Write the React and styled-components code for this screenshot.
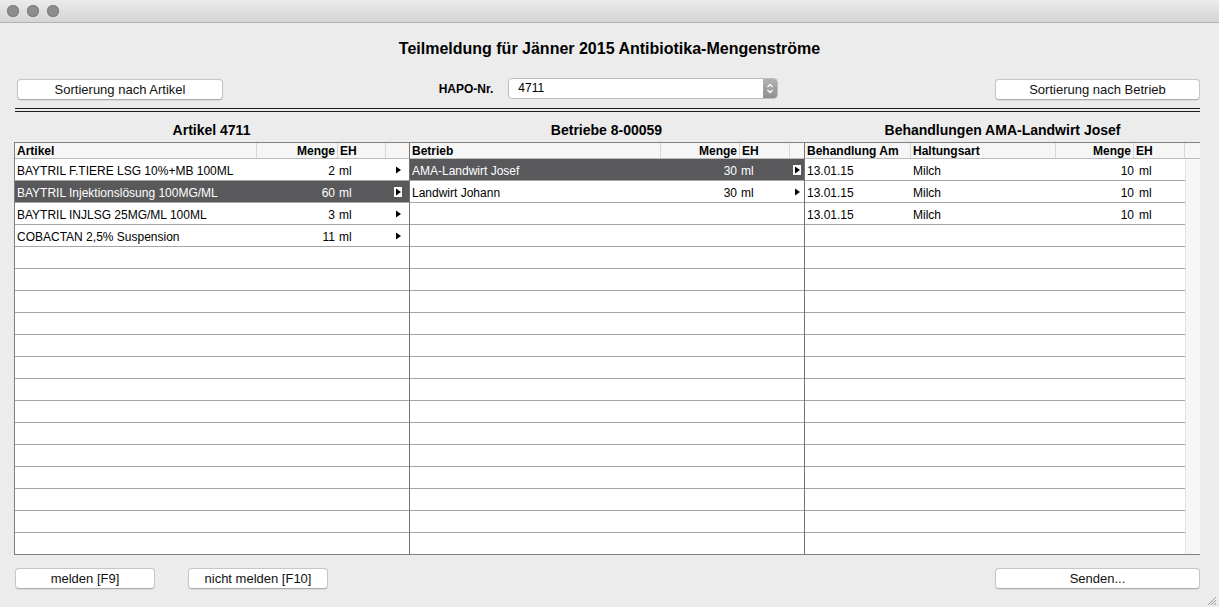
import React from "react";
import styled, { createGlobalStyle } from "styled-components";

const Global = createGlobalStyle`
  html, body { margin: 0; padding: 0; background: #ececec; }
  body { font-family: "Liberation Sans", Arial, sans-serif; color: #000; }
  * { box-sizing: border-box; }
`;

const Window = styled.div`
  position: relative;
  width: 1219px;
  height: 607px;
  background: #ececec;
  overflow: hidden;
  display: flex;
  flex-direction: column;
`;

const TitleBar = styled.div`
  flex: none;
  height: 23px;
  background: linear-gradient(#ebebeb, #d5d5d5);
  border-bottom: 1px solid #b2b2b2;
  display: flex;
  align-items: center;
  gap: 8px;
  padding: 0 0 1px 7px;
`;

const Light = styled.span`
  width: 12px;
  height: 12px;
  border-radius: 50%;
  background: #8e8e8e;
  box-shadow: inset 0 0 0 1px #7c7c7c;
`;

const Heading = styled.h1`
  margin: 16px 0 0;
  font-size: 16px;
  line-height: 19px;
  font-weight: bold;
  text-align: center;
`;

const Toolbar = styled.div`
  margin-top: 20px;
  height: 22px;
  padding: 0 19px 0 17px;
  display: grid;
  grid-template-columns: 1fr auto 1fr;
  align-items: start;
`;

const Button = styled.button`
  width: ${(p) => p.$w}px;
  height: 21px;
  margin-top: ${(p) => p.$mt || 0}px;
  justify-self: ${(p) => p.$justify || "auto"};
  background: #fff;
  border: 1px solid #c6c6c6;
  border-bottom-color: #adadad;
  border-radius: 4px;
  box-shadow: 0 0.5px 1px rgba(0, 0, 0, 0.08);
  font-family: "Liberation Sans", Arial, sans-serif;
  font-size: 13px;
  line-height: 19px;
  color: #111;
  padding: 0;
  text-align: center;
`;

const HapoGroup = styled.div`
  display: flex;
  align-items: center;
  gap: 15px;
  height: 21px;
`;

const Label = styled.span`
  font-size: 12px;
  font-weight: bold;
  line-height: 21px;
  padding-top: 1px;
`;

const Select = styled.div`
  width: 270px;
  height: 21px;
  background: #fff;
  border: 1px solid #bdbdbd;
  border-radius: 4px;
  display: flex;
  align-items: stretch;
  overflow: hidden;
`;

const SelectValue = styled.span`
  flex: 1;
  font-size: 12px;
  line-height: 19px;
  padding-left: 9px;
`;

const Stepper = styled.span`
  width: 14px;
  background: linear-gradient(#b2b2b2, #8f8f8f);
  display: flex;
  align-items: center;
  justify-content: center;
`;

const Rule = styled.div`
  margin: 8px 19px 0 15px;
  height: 4px;
  border-top: 1px solid #1c1c1c;
  border-bottom: 1px solid #1c1c1c;
`;

const PanelTitles = styled.div`
  margin: 10px 19px 0 14px;
  display: grid;
  grid-template-columns: 395px 395px 397px;
`;

const PanelTitle = styled.div`
  font-size: 14px;
  font-weight: bold;
  line-height: 16px;
  text-align: center;
`;

const Table = styled.div`
  margin: 4px 19px 0 14px;
  height: 413px;
  border: 1px solid #7f7f7f;
  display: grid;
  grid-template-columns: 394px 395px 396px;
`;

const Panel = styled.div`
  border-left: ${(p) => (p.$divider ? "1px solid #737373" : "none")};
  overflow: hidden;
  display: flex;
  flex-direction: column;
  background: #fff;
`;

const HeaderRow = styled.div`
  flex: none;
  height: 16px;
  display: grid;
  grid-template-columns: ${(p) => p.$cols};
  background: #f6f6f6;
  border-bottom: 1px solid #bdbdbd;
`;

const HeaderCell = styled.div`
  font-size: 12px;
  font-weight: bold;
  line-height: 14px;
  padding: 1px 2px 0;
  text-align: ${(p) => p.$align || "left"};
  border-right: ${(p) => (p.$last ? "none" : "1px solid #d7d7d7")};
  white-space: nowrap;
  overflow: hidden;
`;

const Body = styled.div`
  flex: 1;
  display: flex;
  min-height: 0;
`;

const Rows = styled.div`
  flex: 1;
  min-width: 0;
`;

const Track = styled.div`
  width: 15px;
  background: #f7f7f7;
  border-left: 1px solid #e2e2e2;
`;

const Row = styled.div`
  height: 22px;
  display: grid;
  grid-template-columns: ${(p) => p.$cols};
  border-bottom: 1px solid #a6a6a6;
  background: ${(p) => (p.$selected ? "#59595b" : "#fff")};
  color: ${(p) => (p.$selected ? "#fff" : "#000")};
`;

const Cell = styled.div`
  font-size: 12px;
  line-height: 18px;
  padding-top: 3px;
  padding-left: ${(p) => p.$pl ?? 2}px;
  padding-right: ${(p) => p.$pr ?? 2}px;
  text-align: ${(p) => p.$align || "left"};
  white-space: nowrap;
  overflow: hidden;
`;

const ArrowCell = styled.div`
  display: flex;
  align-items: center;
  justify-content: center;
`;

const Footer = styled.div`
  margin-top: 13px;
  padding: 0 19px 0 15px;
  display: flex;
  gap: 33px;
`;

const Grip = styled.svg`
  position: absolute;
  right: 2px;
  bottom: 1px;
`;

const Arrow = ({ selected }) => (
  <svg width="8" height="10" viewBox="0 0 8 10">
    {selected && <rect x="0" y="0" width="8" height="10" fill="#fff" />}
    <path d="M2 1.5 L7 5 L2 8.5 Z" fill="#000" />
  </svg>
);

const P1 = "242px 81px 48px 23px";
const P2 = "251px 79px 50px 14px";
const P3 = "106px 145px 78px 51px";
const ROWS = 18;

const articles = [
  { name: "BAYTRIL F.TIERE LSG 10%+MB 100ML", qty: "2" },
  { name: "BAYTRIL Injektionslösung 100MG/ML", qty: "60", selected: true },
  { name: "BAYTRIL INJLSG 25MG/ML 100ML", qty: "3" },
  { name: "COBACTAN 2,5% Suspension", qty: "11" },
];

const farms = [
  { name: "AMA-Landwirt Josef", qty: "30", selected: true },
  { name: "Landwirt Johann", qty: "30" },
];

const treatments = [
  { date: "13.01.15", kind: "Milch", qty: "10" },
  { date: "13.01.15", kind: "Milch", qty: "10" },
  { date: "13.01.15", kind: "Milch", qty: "10" },
];

function fill(list) {
  const out = [...list];
  while (out.length < ROWS) out.push(null);
  return out;
}

export default function App() {
  return (
    <>
      <Global />
      <Window>
        <TitleBar>
          <Light />
          <Light />
          <Light />
        </TitleBar>

        <Heading>Teilmeldung für Jänner 2015 Antibiotika-Mengenströme</Heading>

        <Toolbar>
          <Button $w={206} $mt={1} $justify="start">Sortierung nach Artikel</Button>
          <HapoGroup>
            <Label>HAPO-Nr.</Label>
            <Select>
              <SelectValue>4711</SelectValue>
              <Stepper>
                <svg width="8" height="13" viewBox="0 0 8 13">
                  <path d="M1.5 5 L4 2.5 L6.5 5" fill="none" stroke="#fff" strokeWidth="1.3" />
                  <path d="M1.5 8 L4 10.5 L6.5 8" fill="none" stroke="#fff" strokeWidth="1.3" />
                </svg>
              </Stepper>
            </Select>
          </HapoGroup>
          <Button $w={205} $mt={1} $justify="end">Sortierung nach Betrieb</Button>
        </Toolbar>

        <Rule />

        <PanelTitles>
          <PanelTitle>Artikel 4711</PanelTitle>
          <PanelTitle>Betriebe 8-00059</PanelTitle>
          <PanelTitle>Behandlungen AMA-Landwirt Josef</PanelTitle>
        </PanelTitles>

        <Table>
          <Panel>
            <HeaderRow $cols={P1}>
              <HeaderCell>Artikel</HeaderCell>
              <HeaderCell $align="right">Menge</HeaderCell>
              <HeaderCell>EH</HeaderCell>
              <HeaderCell $last />
            </HeaderRow>
            <Body>
              <Rows>
                {fill(articles).map((r, i) => (
                  <Row key={i} $cols={P1} $selected={r && r.selected}>
                    <Cell>{r && r.name}</Cell>
                    <Cell $align="right" $pr={3}>{r && r.qty}</Cell>
                    <Cell $pl={1}>{r && "ml"}</Cell>
                    <ArrowCell>{r && <Arrow selected={r.selected} />}</ArrowCell>
                  </Row>
                ))}
              </Rows>
            </Body>
          </Panel>

          <Panel $divider>
            <HeaderRow $cols={P2}>
              <HeaderCell>Betrieb</HeaderCell>
              <HeaderCell $align="right">Menge</HeaderCell>
              <HeaderCell>EH</HeaderCell>
              <HeaderCell $last />
            </HeaderRow>
            <Body>
              <Rows>
                {fill(farms).map((r, i) => (
                  <Row key={i} $cols={P2} $selected={r && r.selected}>
                    <Cell>{r && r.name}</Cell>
                    <Cell $align="right" $pr={3}>{r && r.qty}</Cell>
                    <Cell $pl={1}>{r && "ml"}</Cell>
                    <ArrowCell>{r && <Arrow selected={r.selected} />}</ArrowCell>
                  </Row>
                ))}
              </Rows>
            </Body>
          </Panel>

          <Panel $divider>
            <HeaderRow $cols={P3 + " 15px"}>
              <HeaderCell>Behandlung Am</HeaderCell>
              <HeaderCell>Haltungsart</HeaderCell>
              <HeaderCell $align="right">Menge</HeaderCell>
              <HeaderCell>EH</HeaderCell>
              <HeaderCell $last />
            </HeaderRow>
            <Body>
              <Rows>
                {fill(treatments).map((r, i) => (
                  <Row key={i} $cols={P3}>
                    <Cell>{r && r.date}</Cell>
                    <Cell>{r && r.kind}</Cell>
                    <Cell $align="right" $pr={0}>{r && r.qty}</Cell>
                    <Cell $pl={5}>{r && "ml"}</Cell>
                  </Row>
                ))}
              </Rows>
              <Track />
            </Body>
          </Panel>
        </Table>

        <Footer>
          <Button $w={140}>melden [F9]</Button>
          <Button $w={140}>nicht melden [F10]</Button>
          <Button $w={205} style={{ marginLeft: "auto" }}>Senden...</Button>
        </Footer>

        <Grip width="11" height="11" viewBox="0 0 11 11">
          <path d="M10 2 L2 10 M10 5 L5 10 M10 8 L8 10" stroke="#9a9a9a" strokeWidth="1" />
        </Grip>
      </Window>
    </>
  );
}
